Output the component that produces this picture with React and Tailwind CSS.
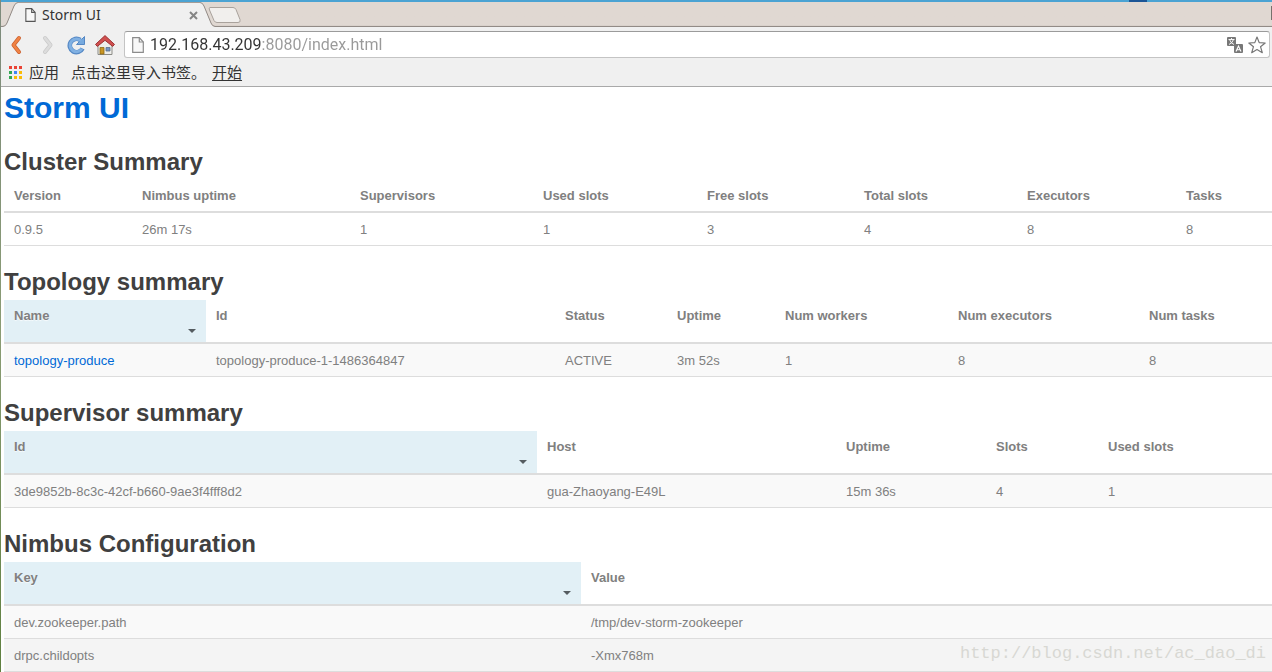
import { useState } from 'react'

const CLUSTER_COLUMNS = [
  { label: 'Version', width: 'w-[128px]' },
  { label: 'Nimbus uptime', width: 'w-[218px]' },
  { label: 'Supervisors', width: 'w-[183px]' },
  { label: 'Used slots', width: 'w-[164px]' },
  { label: 'Free slots', width: 'w-[157px]' },
  { label: 'Total slots', width: 'w-[163px]' },
  { label: 'Executors', width: 'w-[159px]' },
  { label: 'Tasks', width: '' },
]

const TOPOLOGY_COLUMNS = [
  { label: 'Name', width: 'w-[202px]' },
  { label: 'Id', width: 'w-[349px]' },
  { label: 'Status', width: 'w-[112px]' },
  { label: 'Uptime', width: 'w-[108px]' },
  { label: 'Num workers', width: 'w-[173px]' },
  { label: 'Num executors', width: 'w-[191px]' },
  { label: 'Num tasks', width: '' },
]

const SUPERVISOR_COLUMNS = [
  { label: 'Id', width: 'w-[533px]' },
  { label: 'Host', width: 'w-[299px]' },
  { label: 'Uptime', width: 'w-[150px]' },
  { label: 'Slots', width: 'w-[112px]' },
  { label: 'Used slots', width: '' },
]

const CONFIG_COLUMNS = [
  { label: 'Key', width: 'w-[577px]' },
  { label: 'Value', width: '' },
]

const CLUSTER_ROWS = [['0.9.5', '26m 17s', '1', '1', '3', '4', '8', '8']]

const TOPOLOGY_ROWS = [
  [
    <a href="#topology" className="text-[#0069d6]">topology-produce</a>,
    'topology-produce-1-1486364847', 'ACTIVE', '3m 52s', '1', '8', '8',
  ],
]

const SUPERVISOR_ROWS = [
  ['3de9852b-8c3c-42cf-b660-9ae3f4fff8d2', 'gua-Zhaoyang-E49L', '15m 36s', '4', '1'],
]

const CONFIG_ROWS = [
  ['dev.zookeeper.path', '/tmp/dev-storm-zookeeper'],
  ['drpc.childopts', '-Xmx768m'],
]

export default function App() {
  return (
    <div className="relative flex min-h-screen bg-white">
      <div className="w-px shrink-0 bg-linear-to-b from-[#7d8a7c] via-[#8a9c74] to-[#5f8040]" />
      <div className="min-w-0 flex-1">
        <Browser />
        <main className="pt-[3px] pl-[3px] font-['Liberation_Sans',Arial,sans-serif] text-[13px] leading-[18px] text-[#808080]">
          <h1 className="text-[30px] leading-[36px] font-bold">
            <a href="#home" className="text-[#0069d6]">Storm UI</a>
          </h1>
          <Section title="Cluster Summary" columns={CLUSTER_COLUMNS} rows={CLUSTER_ROWS} />
          <Section title="Topology summary" columns={TOPOLOGY_COLUMNS} rows={TOPOLOGY_ROWS} sortable />
          <Section title="Supervisor summary" columns={SUPERVISOR_COLUMNS} rows={SUPERVISOR_ROWS} sortable />
          <Section title="Nimbus Configuration" columns={CONFIG_COLUMNS} rows={CONFIG_ROWS} sortable />
        </main>
      </div>
      <p className="pointer-events-none absolute right-[6px] bottom-[6px] font-['Liberation_Mono',monospace] text-[17px] leading-6 text-[#d8d8d3]">
        http://blog.csdn.net/ac_dao_di
      </p>
    </div>
  )
}

function Section({ title, columns, rows, sortable }) {
  return (
    <section className="mt-[18px]">
      <h2 className="text-[24px] leading-[36px] font-bold text-[#404040]">{title}</h2>
      <table aria-label={title} className="w-full table-fixed border-separate border-spacing-0 text-left">
        <thead>
          <tr>
            {columns.map((col, i) => {
              const sorted = sortable && i === 0
              return (
                <th
                  key={col.label}
                  scope="col"
                  aria-sort={sorted ? 'ascending' : undefined}
                  className={`border-b-2 border-[#dddddd] px-[10px] pt-[7px] align-top font-bold ${col.width} ${
                    sorted ? 'bg-[#e2f0f6] [text-shadow:0_1px_1px_rgba(255,255,255,0.75)]' : ''
                  } ${sortable ? 'pb-[17px]' : 'pb-[6px]'}`}
                >
                  <div className="relative">
                    {col.label}
                    {sorted && (
                      <svg viewBox="0 0 8 4" className="absolute right-0 top-[22px] h-[4px] w-[8px]" aria-hidden="true">
                        <path d="M0 0h8L4 4z" fill="#555c60" />
                      </svg>
                    )}
                  </div>
                </th>
              )
            })}
          </tr>
        </thead>
        <tbody>
          {rows.map((row, r) => (
            <tr key={r} className={sortable ? 'odd:bg-[#f9f9f9] even:bg-[#f4f4f4]' : ''}>
              {row.map((cell, i) => (
                <td key={i} className="border-b border-[#dddddd] px-[10px] pt-[8px] pb-[6px]">{cell}</td>
              ))}
            </tr>
          ))}
        </tbody>
      </table>
    </section>
  )
}

function Browser() {
  const [url, setUrl] = useState('192.168.43.209:8080/index.html')

  return (
    <header className="border-b border-[#a9a9a9] bg-[#f0f0f0] text-[#333333]">
      {/* Desktop panel edge */}
      <div className="flex h-[2px] justify-end bg-[#4ba3d3] pr-[125px]">
        <span className="w-[18px] bg-[#1c5596]" />
      </div>

      {/* Tab strip */}
      <div className="flex h-[25px] items-end bg-linear-to-b from-[#e0d8d2] from-90% to-[#cfc6c0]">
        <div className="h-px w-[2px] bg-[#928b86]" />
        <TabEdge />
        <div className="flex h-[25px] flex-1 max-w-[182px] items-center border-t border-[#a39c97] bg-[#f0f0f0] pl-[7px]">
          <PageIcon className="h-[14px] w-[11px]" stroke="#555555" />
          <span className="ml-[6px] flex-1 font-['Noto_Sans',sans-serif] text-[14px] leading-5">Storm UI</span>
          <button type="button" aria-label="Close tab" className="mr-[2px]">
            <svg viewBox="0 0 9 9" className="h-[9px] w-[9px]" fill="none" stroke="#858585" strokeWidth="2">
              <path d="M1 1l7 7M8 1L1 8" />
            </svg>
          </button>
        </div>
        <TabEdge flip />
        <div className="flex h-[25px] flex-1 items-start border-b border-[#928b86] pt-[4px]">
          <button type="button" aria-label="New tab" className="-ml-[8px]">
            <svg viewBox="0 0 34 18" className="h-[18px] w-[34px]">
              <path
                d="M3 1.500h23q2 0 3 2l4 10q1 3-2 3H10q-2 0-3-2L2.500 4Q1.500 1.500 3 1.500z"
                fill="#f1efed" stroke="#a9a29c"
              />
            </svg>
          </button>
          <span className="ml-auto h-[14px] w-px bg-[#77716d]" />
        </div>
      </div>

      {/* Toolbar */}
      <div className="flex h-[35px] items-center pr-[2px] pl-[9px]">
        <button type="button" aria-label="Back" className="mr-[20px]">
          <svg viewBox="0 0 12 20" className="h-[20px] w-[12px]" fill="none" strokeLinejoin="round" strokeLinecap="round">
            <path d="M9 3L3.500 10l5.500 7" stroke="#c9602f" strokeWidth="4" />
            <path d="M9 3L3.500 10l5.500 7" stroke="#f08345" strokeWidth="2.600" />
          </svg>
        </button>
        <button type="button" aria-label="Forward" className="mr-[12px]">
          <svg viewBox="0 0 12 20" className="h-[20px] w-[12px]" fill="none" strokeLinejoin="round" strokeLinecap="round">
            <path d="M3 3l5.500 7L3 17" stroke="#c9c9c9" strokeWidth="4" />
            <path d="M3 3l5.500 7L3 17" stroke="#dcdcdc" strokeWidth="2.600" />
          </svg>
        </button>
        <button type="button" aria-label="Reload" className="mr-[9px]">
          <svg viewBox="0 0 20 20" className="h-[20px] w-[20px]">
            <path d="M16.500 13.500A6.700 6.700 0 1 1 14.300 5" fill="none" stroke="#5588c4" strokeWidth="4.600" />
            <path d="M18.500 1.500v8H10.500z" fill="#76a9de" stroke="#5588c4" />
            <path d="M15.900 13.700A6.400 6.400 0 1 1 15 5.800" fill="none" stroke="#80b0e2" strokeWidth="3" />
          </svg>
        </button>
        <button type="button" aria-label="Home" className="mr-[9px]">
          <HomeIcon />
        </button>
        <div className="flex h-[27px] flex-1 items-center rounded-[3px] border border-[#c4c4c4] border-t-[#9b9b9b] bg-white pr-[3px] pl-[7px]">
          <PageIcon className="h-[16px] w-[12px]" stroke="#8c8c8c" />
          <input
            type="text"
            aria-label="Address"
            value={url}
            onChange={e => setUrl(e.target.value)}
            className="ml-[6px] h-[25px] min-w-0 flex-1 bg-[linear-gradient(90deg,#333333_111px,#999999_111px)] bg-clip-text font-['Roboto',sans-serif] text-[16px] text-transparent caret-black outline-none"
          />
          <button type="button" aria-label="Translate this page" className="mr-[5px]">
            <svg viewBox="0 0 16 16" className="h-[16px] w-[16px]">
              <rect width="9" height="9" rx="1" fill="#777777" />
              <path d="M4.500 1v1.500M1.500 2.500h6M2.500 2.500q1 3.500 4.500 5M6.500 2.500q-1 3.500-4.500 5" fill="none" stroke="#ffffff" strokeWidth=".9" />
              <rect x="7" y="7" width="9" height="9" rx="1" fill="#777777" />
              <path d="M9 14.500l2.500-5.500 2.500 5.500M10 12.700h3" fill="none" stroke="#ffffff" strokeWidth="1.100" />
            </svg>
          </button>
          <button type="button" aria-label="Bookmark this page">
            <svg viewBox="0 0 18 18" className="h-[18px] w-[18px]" fill="#ffffff" stroke="#777777" strokeWidth="1.200" strokeLinejoin="round">
              <path d="M9 1l2.200 5.600 6 .4-4.700 3.700 1.800 6L9 13.500l-5.300 3.200 1.800-6L.8 7l6-.4z" />
            </svg>
          </button>
        </div>
      </div>

      {/* Bookmarks bar */}
      <nav className="flex h-[24px] items-center pb-[4px] pl-[8px] font-['Noto_Sans_CJK_SC',sans-serif] text-[15px] leading-5">
        <button type="button" className="flex items-center gap-[7px]">
          <AppsIcon />
          应用
        </button>
        <span className="ml-[12px]">点击这里导入书签。</span>
        <a href="#import" className="ml-[6px] underline underline-offset-2">开始</a>
      </nav>
    </header>
  )
}

function TabEdge({ flip }) {
  return (
    <svg viewBox="0 0 15 25" className={`h-[25px] w-[15px] shrink-0 ${flip ? '-scale-x-100' : ''}`} aria-hidden="true">
      <path d="M0 25q3-.5 4-3.500L11 4q1.500-3.500 4-3.500V25z" fill="#f0f0f0" />
      <path d="M0 24.500q3-.5 4-3.500L11 4q1.500-3.500 4-3.500" fill="none" stroke="#928b86" />
    </svg>
  )
}

function PageIcon({ className, stroke }) {
  return (
    <svg viewBox="0 0 12 16" className={className} fill="#f8f8f8" stroke={stroke} strokeWidth="1.200" aria-hidden="true">
      <path d="M.7.700h6.600l4 4.300v10.300H.7z" />
      <path d="M7.300.7V5h4" fill="none" />
    </svg>
  )
}

function HomeIcon() {
  return (
    <svg viewBox="0 0 20 20" className="h-[20px] w-[20px]" aria-hidden="true">
      <path d="M3 10l7-7 7 7v9.500H3z" fill="#eeeeea" stroke="#8b8b86" />
      <path d="M5 12.500h4v6.500H5z" fill="#c99624" stroke="#8d6814" strokeWidth=".8" />
      <path d="M11 12.500h4v3.500h-4z" fill="#7395c3" stroke="#5c6f8c" strokeWidth=".8" />
      <path d="M10 .600l9.500 8.800-1.800 2L10 5.300l-7.700 6.100-1.800-2z" fill="#d04f4f" stroke="#9c3434" strokeLinejoin="round" />
    </svg>
  )
}

const APP_DOTS = [
  '#ea4335', '#ea4335', '#ea4335',
  '#34a853', '#4285f4', '#fbbc05',
  '#34a853', '#fbbc05', '#fbbc05',
]

function AppsIcon() {
  return (
    <svg viewBox="0 0 13 13" className="h-[13px] w-[13px]" aria-hidden="true">
      {APP_DOTS.map((fill, i) => (
        <rect key={i} x={(i % 3) * 5} y={Math.floor(i / 3) * 5} width="3" height="3" fill={fill} />
      ))}
    </svg>
  )
}
